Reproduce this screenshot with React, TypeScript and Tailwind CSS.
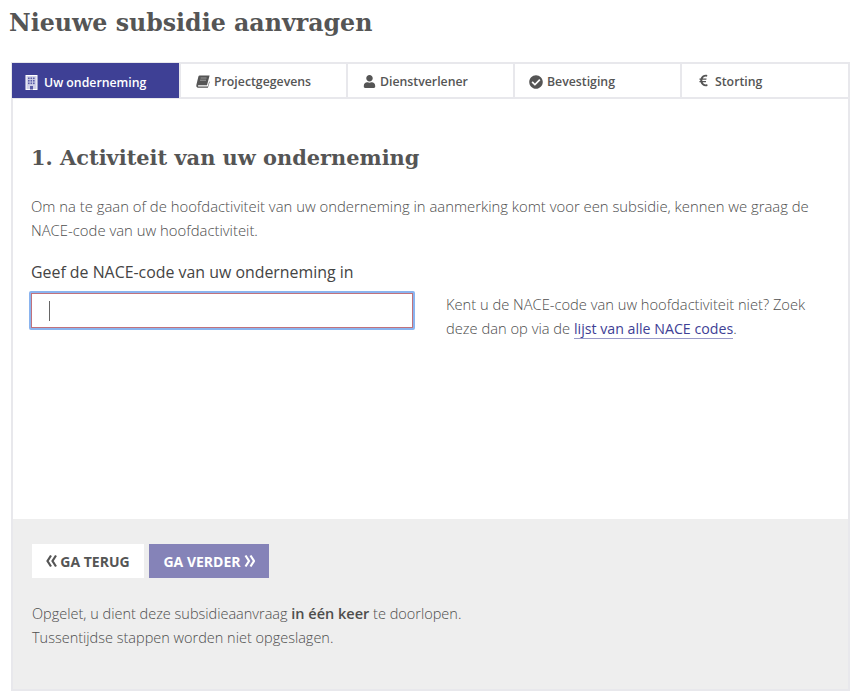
import React from "react";
import { FaCheckCircle, FaEuroSign, FaUser } from "react-icons/fa";

const sans = "font-['Open_Sans','Noto_Sans',sans-serif]";

function BuildingIcon() {
  return (
    <svg width="13" height="15" viewBox="0 0 13 15" className="mt-[3px] shrink-0">
      <rect x="1" y="0.5" width="11" height="14" fill="#cfd0e8" stroke="#ffffff" />
      {[2.5, 5, 7.5].map((y) =>
        [3, 5.5, 8].map((x) => <rect key={`${x}-${y}`} x={x} y={y} width="1.6" height="1.6" fill="#5a5ca6" />)
      )}
      <rect x="5" y="11" width="3" height="3.5" fill="#5a5ca6" />
    </svg>
  );
}

function BookIcon() {
  return (
    <svg width="14" height="13" viewBox="0 0 14 13" className="mt-[3px] shrink-0">
      <path d="M3.6 0.5H13.6L11 10.2H2.6C1.7 10.2 1.6 11.4 2.6 11.4H11.8L13.2 6.4L13.7 6.8L11.9 12.8H2.2C0.6 12.8 0 11.4 0.4 9.8L2.4 1.6C2.6 0.9 3 0.5 3.6 0.5Z" fill="currentColor" />
      <path d="M4.6 3H10.6M4 5.2H10" stroke="#ffffff" strokeWidth="0.7" opacity="0.6" />
    </svg>
  );
}

function Chevrons({ dir }: { dir: "left" | "right" }) {
  const d = dir === "left" ? "M5 1.5 1.5 7 5 12.5M10 1.5 6.5 7 10 12.5" : "M1.5 1.5 5 7 1.5 12.5M6.5 1.5 10 7 6.5 12.5";
  return (
    <svg width="11" height="14" viewBox="0 0 11 14" fill="none" stroke="currentColor" strokeWidth="2.2" className="shrink-0">
      <path d={d} />
    </svg>
  );
}

const tabs = [
  { label: "Uw onderneming", icon: <BuildingIcon />, active: true, width: "w-[167px]", pl: "pl-[13px]", gap: "gap-[6px]" },
  { label: "Projectgegevens", icon: <BookIcon />, active: false, width: "w-[167px]", pl: "pl-[15px]", gap: "gap-[4px]" },
  { label: "Dienstverlener", icon: <FaUser size={13} className="mt-[3px]" />, active: false, width: "w-[167px]", pl: "pl-[15px]", gap: "gap-[4px]" },
  { label: "Bevestiging", icon: <FaCheckCircle size={14} className="mt-[3px]" />, active: false, width: "w-[167px]", pl: "pl-[14px]", gap: "gap-[4px]" },
  { label: "Storting", icon: <FaEuroSign size={13} className="mt-[1px]" />, active: false, width: "flex-1", pl: "pl-[15px]", gap: "gap-[5px]" },
];

export default function App() {
  return (
    <div className={`w-[861px] h-[699px] bg-white overflow-hidden px-[11px] text-[#4d4d4d] ${sans}`}>
      <h1 className="h-[62px] pt-[5px] -ml-[2px] font-['DejaVu_Serif',serif] font-bold text-[23.7px] leading-[36px] text-[#555555]">
        Nieuwe subsidie aanvragen
      </h1>
      <div className="w-[839px] h-[629px] border-2 border-[#e8e8ec] flex flex-col">
        <div className="flex h-[36px] border-b-2 border-[#e8e8ec] shrink-0 -mt-[1px] -ml-[1px]">
          {tabs.map(({ label, icon, active, width, pl, gap }, i) => (
            <div
              key={label}
              className={`${width} flex items-center ${pl} ${gap} text-[12.3px] font-semibold ${
                active ? "bg-[#3e4095] text-white -mb-[1px]" : "text-[#555555]"
              } ${i > 0 ? "border-l-2 border-[#e8e8ec]" : ""}`}
            >
              {icon}
              <span className="mt-[5px]">{label}</span>
            </div>
          ))}
        </div>
        <div className="flex-1 px-[18px] pt-[43px]">
          <h2 className="font-['DejaVu_Serif',serif] font-bold text-[20.9px] leading-[32px] text-[#555555]">
            1. Activiteit van uw onderneming
          </h2>
          <p className="mt-[20px] text-[14.85px] leading-[24px] font-light">
            Om na te gaan of de hoofdactiviteit van uw onderneming in aanmerking komt voor een subsidie, kennen we graag de NACE-code van uw hoofdactiviteit.
          </p>
          <label className="block mt-[18px] text-[15.9px] leading-[24px] text-[#444444]">
            Geef de NACE-code van uw onderneming in
          </label>
          <div className="mt-[7px] flex">
            <div className="-ml-[2px] w-[386px] h-[39px] rounded-[2px] border-2 border-[#8ab4ef] shrink-0">
              <div className="h-full border border-[#c0727c] pl-[17px] flex items-center">
                <span className="w-px h-[20px] bg-[#666666]" />
              </div>
            </div>
            <p className="ml-[31px] mt-[1px] text-[14.7px] leading-[24px] font-light">
              Kent u de NACE-code van uw hoofdactiviteit niet? Zoek deze dan op via de{" "}
              <a className="font-normal text-[14.2px] text-[#3e4095] border-b border-[#9a9ac8]">lijst van alle NACE codes</a>.
            </p>
          </div>
        </div>
        <div className="h-[170px] bg-[#eeeeee] px-[19px] pt-[25px] shrink-0">
          <div className="flex gap-[5px]">
            <button className="w-[112px] h-[34px] bg-white text-[14px] font-bold text-[#555555] flex items-center justify-center gap-[3px]">
              <Chevrons dir="left" />
              GA TERUG
            </button>
            <button className="w-[120px] h-[34px] bg-[#8583b8] text-[14px] font-bold text-white flex items-center justify-center gap-[3px]">
              GA VERDER
              <Chevrons dir="right" />
            </button>
          </div>
          <p className="mt-[24px] text-[14.5px] leading-[24px] font-light">
            Opgelet, u dient deze subsidieaanvraag <strong className="font-semibold">in één keer</strong> te doorlopen.
            <br />
            Tussentijdse stappen worden niet opgeslagen.
          </p>
        </div>
      </div>
    </div>
  );
}
